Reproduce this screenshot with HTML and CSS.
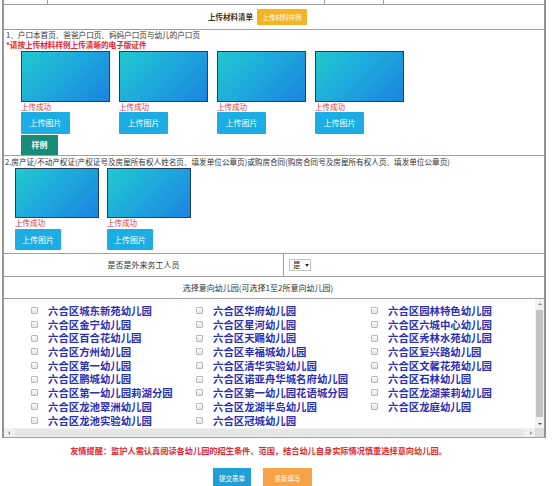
FILE: index.html
```html
<!DOCTYPE html>
<html lang="zh-CN">
<head>
<meta charset="utf-8">
<title>上传材料清单</title>
<link rel="stylesheet" href="styles.css">
</head>
<body>
<div class="sheet">
  <div class="row row-top">
    <div class="cell"></div>
    <div class="cell"></div>
    <div class="cell"></div>
    <div class="cell"></div>
  </div>

  <div class="row row-head">
    <span class="head-title">上传材料清单</span>
    <span class="btn btn-yellow">上传材料样例</span>
  </div>

  <div class="row row-upload one">
    <div class="note">1、户口本首页、爸爸户口页、妈妈户口页与幼儿的户口页</div>
    <div class="warn">*请按上传材料样例上传清晰的电子版证件</div>
    <div class="thumbs">
      <div class="item">
        <div class="thumb"></div>
        <div class="ok">上传成功</div>
        <span class="btn btn-upload">上传图片</span>
      </div>
      <div class="item">
        <div class="thumb"></div>
        <div class="ok">上传成功</div>
        <span class="btn btn-upload">上传图片</span>
      </div>
      <div class="item">
        <div class="thumb"></div>
        <div class="ok">上传成功</div>
        <span class="btn btn-upload">上传图片</span>
      </div>
      <div class="item">
        <div class="thumb"></div>
        <div class="ok">上传成功</div>
        <span class="btn btn-upload">上传图片</span>
      </div>
    </div>
    <span class="btn btn-sample">样例</span>
  </div>

  <div class="row row-upload two">
    <div class="note">2.房产证/不动产权证(产权证号及房屋所有权人姓名页、填发单位公章页)或购房合同(购房合同号及房屋所有权人页、填发单位公章页)</div>
    <div class="thumbs">
      <div class="item">
        <div class="thumb"></div>
        <div class="ok">上传成功</div>
        <span class="btn btn-upload">上传图片</span>
      </div>
      <div class="item">
        <div class="thumb"></div>
        <div class="ok">上传成功</div>
        <span class="btn btn-upload">上传图片</span>
      </div>
    </div>
  </div>

  <div class="row row-field">
    <div class="field-label">是否是外来务工人员</div>
    <div class="field-value"><span class="select">是<span class="caret"></span></span></div>
  </div>

  <div class="row row-caption">选择意向幼儿园(可选择1至2所意向幼儿园)</div>

  <div class="row row-list">
    <div class="list-main">
      <div class="list">
        <label class="opt"><span class="check"></span>六合区城东新苑幼儿园</label>
        <label class="opt"><span class="check"></span>六合区华府幼儿园</label>
        <label class="opt"><span class="check"></span>六合区园林特色幼儿园</label>
        <label class="opt"><span class="check"></span>六合区金宁幼儿园</label>
        <label class="opt"><span class="check"></span>六合区星河幼儿园</label>
        <label class="opt"><span class="check"></span>六合区六城中心幼儿园</label>
        <label class="opt"><span class="check"></span>六合区百合花幼儿园</label>
        <label class="opt"><span class="check"></span>六合区天赐幼儿园</label>
        <label class="opt"><span class="check"></span>六合区秀林水苑幼儿园</label>
        <label class="opt"><span class="check"></span>六合区方州幼儿园</label>
        <label class="opt"><span class="check"></span>六合区幸福城幼儿园</label>
        <label class="opt"><span class="check"></span>六合区复兴路幼儿园</label>
        <label class="opt"><span class="check"></span>六合区第一幼儿园</label>
        <label class="opt"><span class="check"></span>六合区清华实验幼儿园</label>
        <label class="opt"><span class="check"></span>六合区文馨花苑幼儿园</label>
        <label class="opt"><span class="check"></span>六合区鹏城幼儿园</label>
        <label class="opt"><span class="check"></span>六合区诺亚舟华城名府幼儿园</label>
        <label class="opt"><span class="check"></span>六合区石林幼儿园</label>
        <label class="opt"><span class="check"></span>六合区第一幼儿园莉湖分园</label>
        <label class="opt"><span class="check"></span>六合区第一幼儿园花语城分园</label>
        <label class="opt"><span class="check"></span>六合区龙湖茉莉幼儿园</label>
        <label class="opt"><span class="check"></span>六合区龙池翠洲幼儿园</label>
        <label class="opt"><span class="check"></span>六合区龙湖半岛幼儿园</label>
        <label class="opt"><span class="check"></span>六合区龙庭幼儿园</label>
        <label class="opt"><span class="check"></span>六合区龙池实验幼儿园</label>
        <label class="opt"><span class="check"></span>六合区冠城幼儿园</label>
      </div>
      <div class="vbar">
        <span class="arrow arrow-up"></span>
        <span class="vtrack"><span class="vthumb"></span></span>
        <span class="arrow arrow-down"></span>
      </div>
    </div>
    <div class="hbar">
      <span class="arrow arrow-left"></span>
      <span class="htrack"></span>
      <span class="arrow arrow-right"></span>
      <span class="corner"></span>
    </div>
  </div>
</div>

<div class="footer">
  <p class="tip">友情提醒：监护人需认真阅读各幼儿园的招生条件、范围，结合幼儿自身实际情况慎重选择意向幼儿园。</p>
  <div class="actions">
    <span class="btn btn-submit">提交表单</span>
    <span class="btn btn-reset">重新填写</span>
  </div>
</div>
</body>
</html>
```

FILE: styles.css
```css
html, body {
  margin: 0;
  padding: 0;
  background: #fff;
}

body {
  font-family: "Noto Sans CJK SC", "Noto Sans", sans-serif;
  color: #333;
  font-size: 8px;
  line-height: 10px;
  overflow: hidden;
}

/* form sheet with grey grid lines */
.sheet {
  width: 544px;
  margin-left: 2px;
  box-sizing: border-box;
  border-left: 2px solid #959595;
  border-right: 2px solid #959595;
}

.row {
  border-bottom: 1px solid #a0a0a0;
}

.row-top {
  display: grid;
  grid-template-columns: 44px 277px 59px 1fr;
  height: 4px;
}

.row-top .cell {
  border-right: 1px solid #a0a0a0;
}

.row-top .cell:last-child {
  border-right: 0;
}

.row-head {
  height: 24px;
  display: flex;
  align-items: center;
  justify-content: center;
  gap: 4px;
  padding-right: 33px;
}

.head-title {
  font-size: 7.5px;
  font-weight: bold;
  color: #333;
}

.btn {
  display: inline-flex;
  align-items: center;
  justify-content: center;
  color: #fff;
  box-sizing: border-box;
}

.btn-yellow {
  width: 50px;
  height: 16px;
  background: #f6b423;
  font-size: 6.5px;
  border-radius: 1px;
}

/* upload blocks */
.row-upload.one {
  padding: 0 0 0 2px;
}

.row-upload.two {
  padding: 0 0 3px 1px;
}

.note {
  font-size: 7.6px;
  line-height: 10px;
  color: #333;
  white-space: nowrap;
}

.two .note {
  line-height: 11px;
}

.warn {
  font-size: 7.6px;
  line-height: 10px;
  font-weight: bold;
  color: #e3262b;
}

.thumbs {
  display: flex;
  margin-top: 1px;
}

.one .thumbs {
  margin-left: 15px;
  gap: 9px;
}

.two .thumbs {
  margin-left: 10px;
  gap: 8px;
}

.item {
  display: flex;
  flex-direction: column;
  align-items: flex-start;
}

.one .item {
  width: 89px;
}

.two .item {
  width: 84px;
}

.thumb {
  width: 100%;
  box-sizing: border-box;
  border: 1px solid #1f3f5c;
  background: linear-gradient(135deg, #21c9cf 0%, #1eaadc 45%, #1b84e0 100%);
}

.one .thumb {
  height: 51px;
}

.two .thumb {
  height: 50px;
}

.ok {
  font-size: 7.5px;
  line-height: 10px;
  color: #e2323a;
}

.btn-upload {
  background: #1badE3;
  font-size: 8px;
  border-radius: 1px;
}

.one .btn-upload {
  width: 49px;
  height: 22px;
}

.two .btn-upload {
  width: 46px;
  height: 21px;
  margin-top: 1px;
}

.btn-sample {
  width: 37px;
  height: 20px;
  margin: 1px 0 0 15px;
  background: #178b76;
  font-size: 8px;
  font-weight: bold;
}

/* yes/no field */
.row-field {
  height: 22px;
  display: grid;
  grid-template-columns: 280px 1fr;
}

.field-label {
  border-right: 1px solid #a0a0a0;
  display: flex;
  align-items: center;
  justify-content: center;
  font-size: 8px;
}

.field-value {
  display: flex;
  align-items: center;
  padding-left: 5px;
}

.select {
  display: inline-flex;
  align-items: center;
  gap: 4px;
  height: 12px;
  width: 22px;
  box-sizing: border-box;
  padding-left: 3px;
  border: 1px solid #c4c4c4;
  font-size: 7.5px;
  color: #222;
}

.caret {
  width: 0;
  height: 0;
  border-left: 2px solid transparent;
  border-right: 2px solid transparent;
  border-top: 3px solid #333;
}

.row-caption {
  height: 21px;
  display: flex;
  align-items: center;
  justify-content: center;
  padding-right: 32px;
  font-size: 8px;
}

/* kindergarten choices */
.row-list {
  display: flex;
  flex-direction: column;
}

.list-main {
  display: flex;
  height: 129px;
}

.list {
  flex: 1;
  display: grid;
  grid-template-columns: 165px 175px 1fr;
  grid-auto-rows: 13.7px;
  align-content: start;
  padding: 5px 0 0 27px;
}

.opt {
  display: flex;
  align-items: center;
  font-size: 10.4px;
  line-height: 13.7px;
  font-weight: bold;
  color: #2a30b6;
  white-space: nowrap;
}

.check {
  width: 7px;
  height: 7px;
  box-sizing: border-box;
  border: 1px solid #b9b9b9;
  border-radius: 1px;
  background: linear-gradient(#fdfdfd, #e4e4e4);
  margin-right: 10px;
  flex: none;
}

.vbar {
  width: 9px;
  display: flex;
  flex-direction: column;
  background: #f1f1f1;
}

.vtrack {
  flex: 1;
  display: flex;
  padding: 2px 1px;
}

.vthumb {
  flex: 1;
  background: #c3c3c3;
}

.hbar {
  height: 9px;
  display: flex;
  background: #f1f1f1;
}

.htrack {
  flex: 1;
  margin: 1px 2px;
  background: #e6e6e6;
}

.corner {
  width: 9px;
  background: #dcdcdc;
}

.arrow {
  width: 9px;
  height: 9px;
  display: flex;
  align-items: center;
  justify-content: center;
  flex: none;
}

.arrow::before {
  content: "";
  width: 0;
  height: 0;
}

.arrow-up::before {
  border-left: 2px solid transparent;
  border-right: 2px solid transparent;
  border-bottom: 2px solid #8a8a8a;
}

.arrow-down::before {
  border-left: 2px solid transparent;
  border-right: 2px solid transparent;
  border-top: 2px solid #505050;
}

.arrow-left::before {
  border-top: 2px solid transparent;
  border-bottom: 2px solid transparent;
  border-right: 2px solid #8a8a8a;
}

.arrow-right::before {
  border-top: 2px solid transparent;
  border-bottom: 2px solid transparent;
  border-left: 2px solid #8a8a8a;
}

/* footer */
.footer {
  width: 525px;
}

.tip {
  margin: 6px 0 0;
  padding-right: 8px;
  text-align: center;
  font-size: 8.2px;
  line-height: 12px;
  font-weight: bold;
  color: #e3262b;
  white-space: nowrap;
}

.actions {
  display: flex;
  justify-content: center;
  gap: 12px;
  margin-top: 12px;
}

.btn-submit,
.btn-reset {
  height: 20px;
  font-size: 6.5px;
}

.btn-submit {
  width: 38px;
  background: #1f9fd5;
}

.btn-reset {
  width: 49px;
  background: #f6a348;
}
```
